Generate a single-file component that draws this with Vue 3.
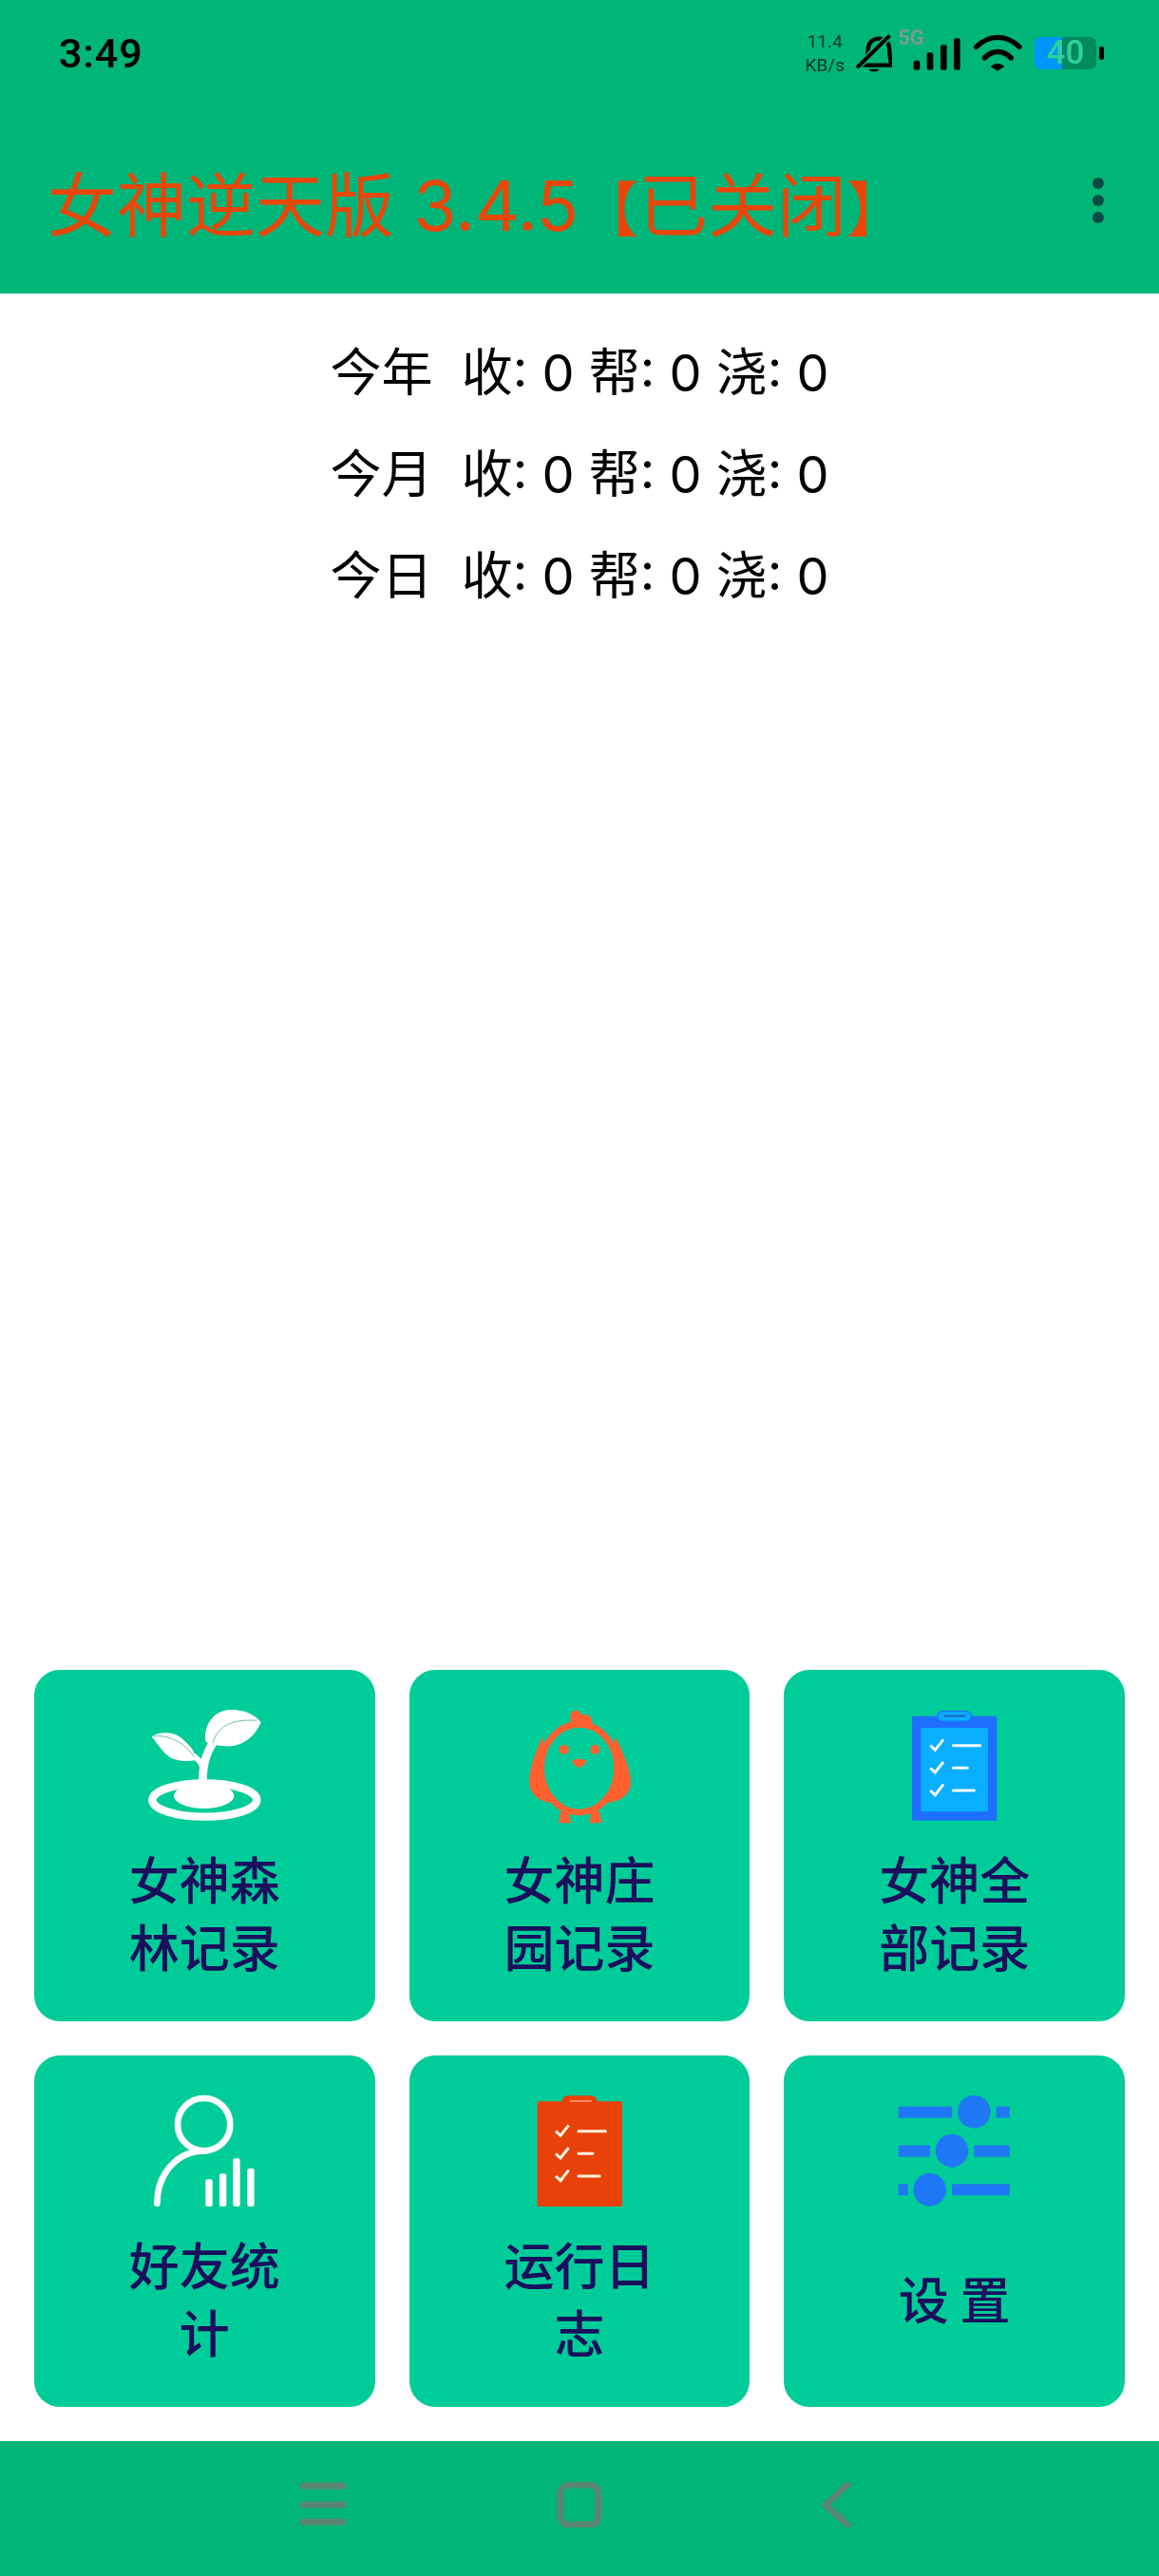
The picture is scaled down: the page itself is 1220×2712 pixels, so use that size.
<script setup>
const stats = [
  { label: '今年', shou: 0, bang: 0, jiao: 0 },
  { label: '今月', shou: 0, bang: 0, jiao: 0 },
  { label: '今日', shou: 0, bang: 0, jiao: 0 },
]

const battery = 40

const signalBars = [
  { x: 430, y: 155, h: 30 },
  { x: 472, y: 130, h: 55 },
  { x: 515, y: 106, h: 79 },
  { x: 557, y: 85, h: 100 },
]

const checkRows = [0, 71, 142]
</script>

<template>
  <div class="page">
    <header class="top">
      <div class="status-bar">
        <span class="clock">3:49</span>
        <div class="status-icons">
          <div class="net-speed">
            <span>11.4</span>
            <span>KB/s</span>
          </div>
          <svg class="ic-bell" width="38" height="40" viewBox="243 76 114 120">
            <path d="M262 174c14-14 18-30 19-50 1-22 16-34 34-34 20 0 32 12 33 28 1 22 2 38 8 56z" fill="none" stroke="#000" stroke-width="13" stroke-linejoin="round" />
            <path d="M250 178L346 84" stroke="#00b578" stroke-width="22" />
            <path d="M250 178L346 84" stroke="#000" stroke-width="12" stroke-linecap="round" />
            <path d="M285 186h30a15 8 0 0 1-30 0z" fill="#000" />
          </svg>
          <div class="cell">
            <span class="five-g">5G</span>
            <svg width="52" height="40" viewBox="425 72 156 120">
              <rect v-for="bar in signalBars" :key="bar.x" :x="bar.x" :y="bar.y" width="20" :height="bar.h" rx="6" fill="#000" />
            </svg>
          </div>
          <svg class="ic-wifi" width="53" height="40" viewBox="614 76 159 120">
            <path d="M625 116c40-40 96-40 136 0" fill="none" stroke="#000" stroke-width="16" stroke-linecap="round" />
            <path d="M651 151c26-26 58-26 84 0" fill="none" stroke="#000" stroke-width="16" stroke-linecap="round" />
            <path d="M670 178c12-12 32-12 44 0l-22 14z" fill="#000" />
          </svg>
          <div class="battery">
            <div class="battery-body">
              <div class="battery-fill" :style="{ width: (battery + 5) + '%' }"></div>
              <span class="battery-text">{{ battery }}</span>
            </div>
            <div class="battery-nub"></div>
          </div>
        </div>
      </div>
      <div class="app-bar">
        <h1 class="title">女神逆天版 3.4.5<span class="bracket">【</span>已关闭<span class="bracket">】</span></h1>
        <div class="more">
          <i></i><i></i><i></i>
        </div>
      </div>
    </header>

    <main class="content">
      <section class="stats">
        <div v-for="row in stats" :key="row.label" class="stat-row">{{ row.label + '  ' }}收: {{ row.shou }} 帮: {{ row.bang }} 浇: {{ row.jiao }}</div>
      </section>

      <section class="grid">
        <div class="card">
          <svg class="icon" width="120" height="120" viewBox="406 144 360 360">
            <ellipse cx="587" cy="435" rx="165" ry="53" fill="none" stroke="#fff" stroke-width="25" />
            <ellipse cx="585" cy="422" rx="95" ry="40" fill="#fff" />
            <path d="M583 385C578 335 590 290 616 250" fill="none" stroke="#fff" stroke-width="26" />
            <path d="M582 335C576 310 560 302 535 285" fill="none" stroke="#fff" stroke-width="18" />
            <path d="M590 250C584 192 620 150 672 150C712 150 746 166 765 190C745 240 700 270 650 265C622 262 602 262 590 250Z" fill="#fff" />
            <path d="M614 255C625 205 670 178 752 184" fill="none" stroke="#2b9d84" stroke-width="2" />
            <path d="M420 235C450 215 500 220 525 250C550 272 560 290 556 310C520 316 480 310 460 285C442 265 432 250 420 235Z" fill="#fff" />
            <path d="M426 234C470 228 520 250 554 298" fill="none" stroke="#2b9d84" stroke-width="2" />
          </svg>
          <div class="label">女神森林记录</div>
        </div>

        <div class="card">
          <svg class="icon" width="120" height="120" viewBox="391 144 360 360">
            <path d="M455 235C425 300 405 360 416 400C428 430 455 442 490 445Z" fill="#ff5f2e" />
            <path d="M685 235C715 300 742 360 730 400C716 430 688 442 650 445Z" fill="#ff5f2e" />
            <circle cx="560" cy="170" r="18" fill="#ff5f2e" />
            <path d="M542 175L570 165L600 167C612 175 612 190 610 205L545 205Z" fill="#ff5f2e" />
            <ellipse cx="570" cy="335" rx="120" ry="139" fill="#00cc99" stroke="#ff5f2e" stroke-width="20" />
            <circle cx="522" cy="276" r="15" fill="#ff5f2e" />
            <circle cx="620" cy="276" r="15" fill="#ff5f2e" />
            <path d="M547 312C558 304 582 304 594 312C586 326 578 332 570 332C562 332 554 326 547 312Z" fill="#ff5f2e" />
            <path d="M512 470H538L543 508H505Z" fill="#ff5f2e" />
            <path d="M608 470H634L641 508H602Z" fill="#ff5f2e" />
          </svg>
          <div class="label">女神庄园记录</div>
        </div>

        <div class="card">
          <svg class="icon" width="120" height="120" viewBox="405 144 360 360">
            <rect x="450" y="170" width="268" height="330" rx="5" fill="#1e6fff" />
            <rect x="478" y="207" width="212" height="265" rx="7" fill="#0aaeff" />
            <rect x="530" y="155" width="108" height="32" rx="16" fill="#0aaeff" stroke="#1e6fff" stroke-width="4" />
            <rect x="550" y="166" width="70" height="7" rx="3" fill="#1b6fcc" />
            <g v-for="dy in checkRows" :key="dy" :transform="`translate(0 ${dy})`">
              <path d="M508 263L523 277L549 244" fill="none" stroke="#eef9f6" stroke-width="9" />
            </g>
            <path d="M580 263H665M580 334H625M580 405H646" stroke="#f2fbff" stroke-width="9" stroke-linecap="round" />
          </svg>
          <div class="label">女神全部记录</div>
        </div>

        <div class="card">
          <svg class="icon" width="120" height="120" viewBox="406 165 360 360">
            <circle cx="585" cy="263" r="83" fill="none" stroke="#fff" stroke-width="20" />
            <path d="M437 512C437 430 490 346 590 346" fill="none" stroke="#fff" stroke-width="20" stroke-linecap="round" />
            <rect x="590" y="436" width="22" height="86" rx="6" fill="#fff" />
            <rect x="634" y="418" width="22" height="104" rx="6" fill="#fff" />
            <rect x="677" y="370" width="22" height="152" rx="6" fill="#fff" />
            <rect x="722" y="402" width="22" height="120" rx="6" fill="#fff" />
          </svg>
          <div class="label">好友统计</div>
        </div>

        <div class="card">
          <svg class="icon" width="120" height="120" viewBox="391 165 360 360">
            <rect x="438" y="190" width="268" height="332" rx="5" fill="#e8420a" />
            <path d="M516 192C516 178 524 172 536 172H606C618 172 626 178 626 192Z" fill="#e8420a" />
            <rect x="540" y="186" width="70" height="6" rx="3" fill="#ff8a5c" />
            <g v-for="dy in checkRows" :key="dy" :transform="`translate(-12 ${dy + 21})`">
              <path d="M508 263L523 277L549 244" fill="none" stroke="#fff3e0" stroke-width="9" />
            </g>
            <path d="M568 284H653M568 355H613M568 426H634" stroke="#fff3e0" stroke-width="9" stroke-linecap="round" />
          </svg>
          <div class="label">运行日志</div>
        </div>

        <div class="card">
          <svg class="icon" width="120" height="120" viewBox="405 165 360 360">
            <g fill="#1e78f5">
              <rect x="407" y="206" width="170" height="36" />
              <circle cx="646" cy="223" r="52" />
              <rect x="716" y="206" width="42" height="36" />
              <rect x="407" y="329" width="100" height="36" />
              <circle cx="576" cy="346" r="52" />
              <rect x="646" y="329" width="112" height="36" />
              <rect x="407" y="451" width="30" height="36" />
              <circle cx="506" cy="469" r="52" />
              <rect x="576" y="451" width="182" height="36" />
            </g>
          </svg>
          <div class="label">设 置</div>
        </div>
      </section>
    </main>

    <nav class="nav-bar">
      <svg width="48" height="48" viewBox="0 0 48 48">
        <path d="M3 4H45M3 24H45M3 42H45" stroke="#5a8573" stroke-width="7" stroke-linecap="round" />
      </svg>
      <svg width="48" height="48" viewBox="0 0 48 48">
        <rect x="4" y="3" width="40" height="42" rx="9" fill="none" stroke="#5a8573" stroke-width="7" />
      </svg>
      <svg width="48" height="48" viewBox="0 0 48 48">
        <path d="M36 3L13 24L36 45" fill="none" stroke="#5a8573" stroke-width="7" stroke-linecap="round" stroke-linejoin="round" />
      </svg>
    </nav>
  </div>
</template>

<style scoped>
.page {
  width: 1220px;
  height: 2712px;
  display: flex;
  flex-direction: column;
  background: #fff;
  font-family: "Noto Sans CJK SC", "Noto Sans", sans-serif;
  color: #000;
}

.top, .nav-bar { background: #00b578; }

.status-bar {
  height: 117px;
  padding: 0 58px 6px 62px;
  box-sizing: border-box;
  display: flex;
  align-items: center;
  justify-content: space-between;
}
.clock {
  font-family: Roboto, sans-serif;
  font-size: 43px;
  font-weight: 500;
  letter-spacing: 1px;
}
.status-icons {
  display: flex;
  align-items: center;
  gap: 12px;
}
.net-speed {
  display: flex;
  flex-direction: column;
  align-items: center;
  font-family: Roboto, sans-serif;
  font-size: 19px;
  line-height: 25px;
  color: #0d3a2a;
}
.cell {
  position: relative;
  margin-left: 9px;
}
.cell svg { display: block; }
.five-g {
  position: absolute;
  left: -15px;
  top: -5px;
  font-family: Roboto, sans-serif;
  font-size: 22px;
  line-height: 18px;
  font-weight: 700;
  color: #74a08e;
}
.battery {
  display: flex;
  align-items: center;
  gap: 3px;
}
.battery-body {
  position: relative;
  width: 65px;
  height: 34px;
  border-radius: 7px;
  background: #008a5e;
}
.battery-fill {
  height: 100%;
  border-radius: 7px 0 0 7px;
  background: #0096ff;
}
.battery-text {
  position: absolute;
  left: 0;
  right: 0;
  top: 0;
  text-align: center;
  font-family: Roboto, sans-serif;
  font-size: 35px;
  line-height: 34px;
  font-weight: 500;
  color: #2fd09a;
}
.battery-nub {
  width: 5px;
  height: 14px;
  border-radius: 2px;
  background: #000;
}

.app-bar {
  height: 192px;
  padding: 0 58px 4px 50px;
  box-sizing: border-box;
  display: flex;
  align-items: center;
  justify-content: space-between;
}
.title {
  margin: 0;
  font-family: Inter, "Noto Sans CJK SC", sans-serif;
  font-size: 73px;
  font-weight: 400;
  color: #e8470a;
  white-space: nowrap;
}
.bracket { font-size: 63px; }
.more {
  display: flex;
  flex-direction: column;
  gap: 6px;
}
.more i {
  display: block;
  width: 12px;
  height: 12px;
  border-radius: 50%;
  background: #0a4a44;
}

.content {
  flex: 1;
  display: flex;
  flex-direction: column;
  justify-content: space-between;
}
.stats { padding-top: 30px; }
.stat-row {
  height: 107px;
  line-height: 107px;
  text-align: center;
  white-space: pre;
  font-family: Inter, "Noto Sans CJK SC", sans-serif;
  font-size: 54px;
}

.grid {
  display: grid;
  grid-template-columns: repeat(3, 1fr);
  grid-auto-rows: 370px;
  gap: 36px;
  padding: 36px;
}
.card {
  display: flex;
  flex-direction: column;
  align-items: center;
  padding: 40px 0 44px;
  box-sizing: border-box;
  background: #00cc99;
  border-radius: 27px;
}
.icon {
  flex: none;
  overflow: visible;
}
.label {
  flex: 1;
  width: 164px;
  margin-top: 24px;
  display: flex;
  align-items: center;
  justify-content: center;
  text-align: center;
  font-size: 53px;
  line-height: 71px;
  font-weight: 500;
  color: #1a0f5c;
}

.nav-bar {
  height: 142px;
  flex: none;
  display: flex;
  align-items: center;
  justify-content: center;
  gap: 222px;
  padding-bottom: 8px;
  box-sizing: border-box;
}
</style>

<style>
body { background: #fff; }
</style>
